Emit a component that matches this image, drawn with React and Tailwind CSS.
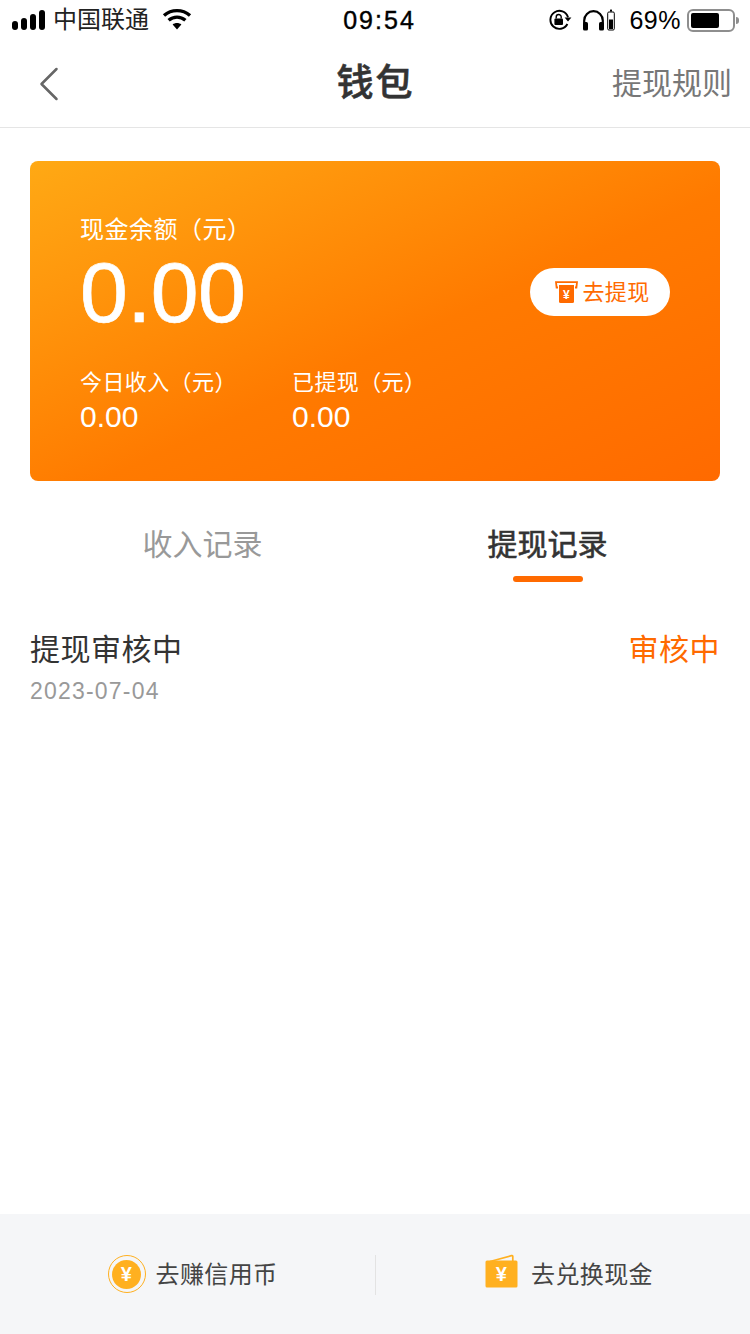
import { ChevronLeft } from 'lucide-react';

const FONT = "font-['Liberation_Sans','Noto_Sans_CJK_SC',sans-serif]";

function SignalBars() {
  return (
    <div className="flex items-end gap-[3px] h-[20px]">
      <span className="w-[6px] h-[9px] rounded-full bg-black" />
      <span className="w-[6px] h-[12px] rounded-full bg-black" />
      <span className="w-[6px] h-[16px] rounded-full bg-black" />
      <span className="w-[6px] h-[20px] rounded-full bg-black" />
    </div>
  );
}

function WifiIcon() {
  return (
    <svg width="30" height="22" viewBox="0 0 30 22" fill="none" stroke="black" strokeWidth="3.4">
      <path d="M2 7.5C9.5 1 20.5 1 28 7.5" />
      <path d="M6.6 12.3C11.6 8 18.4 8 23.4 12.3" />
      <path d="M15 21.5L10.6 16.6C13 14.6 17 14.6 19.4 16.6Z" fill="black" stroke="none" />
    </svg>
  );
}

function RotationLock() {
  return (
    <svg width="24" height="22" viewBox="0 0 24 22" fill="none">
      <path d="M20 8.2A9 9 0 1 0 19.4 15" stroke="black" strokeWidth="1.9" />
      <path d="M16.6 8.4H23.4L20 12.4Z" fill="black" />
      <rect x="6.4" y="9.4" width="8.6" height="6.6" rx="1" fill="black" />
      <path d="M8.2 9.6V8A2.5 2.5 0 0 1 13.2 8V9.6" stroke="black" strokeWidth="1.4" />
    </svg>
  );
}

function Headphones() {
  return (
    <svg width="34" height="22" viewBox="0 0 34 22" fill="none">
      <path d="M2.2 18V11.5A9.3 9.3 0 0 1 20.8 11.5V18" stroke="black" strokeWidth="2.2" />
      <rect x="1" y="13" width="5" height="8.5" rx="1.6" fill="black" />
      <rect x="17" y="13" width="5" height="8.5" rx="1.6" fill="black" />
      <rect x="25.7" y="3" width="6.6" height="18" rx="1.2" stroke="black" strokeWidth="1" />
      <rect x="28" y="0.6" width="2" height="2" fill="black" />
      <rect x="27" y="10.5" width="4" height="9.5" fill="black" />
    </svg>
  );
}

function Battery() {
  return (
    <div className="flex items-center">
      <div className="w-[48px] h-[23px] rounded-[6px] border-2 border-[#8e8e8e] p-[2px]">
        <div className="w-[28px] h-full rounded-[2px] bg-black" />
      </div>
      <span className="ml-[1px] w-[3px] h-[7px] rounded-r-full bg-[#8e8e8e]" />
    </div>
  );
}

function CashIcon() {
  return (
    <svg width="23" height="24" viewBox="0 0 23 24" fill="none">
      <path d="M3 7.5H1.6L1 2.2H22L21.4 7.5H20" stroke="#ff6a00" strokeWidth="1.8" />
      <path d="M4 5H19V21.5A1.5 1.5 0 0 1 17.5 23H5.5A1.5 1.5 0 0 1 4 21.5Z" fill="#ff6a00" />
      <text x="11.5" y="18.5" textAnchor="middle" fontSize="12" fontWeight="700" fill="white" fontFamily="Liberation Sans">¥</text>
    </svg>
  );
}

function CoinIcon() {
  return (
    <div className="w-[38px] h-[38px] -translate-y-[1px] rounded-full border border-[#ffb020] flex items-center justify-center">
      <div className="w-[29px] h-[29px] rounded-full bg-[#ffb020] flex items-center justify-center text-white text-[20px] font-bold leading-none">¥</div>
    </div>
  );
}

function WalletIcon() {
  return (
    <svg width="33" height="34" viewBox="0 0 33 34" fill="none">
      <path d="M5 7.5L26.5 1.6C27.4 1.4 27.8 1.8 27.8 2.6V7" stroke="#ffb020" strokeWidth="1.7" />
      <rect x="0.5" y="6.5" width="32" height="27" rx="1.5" fill="#ffb020" />
      <text x="16.5" y="27" textAnchor="middle" fontSize="20" fontWeight="700" fill="white" fontFamily="Liberation Sans">¥</text>
    </svg>
  );
}

export default function App() {
  return (
    <div className={`${FONT} w-[750px] h-[1334px] bg-white flex flex-col overflow-hidden`}>
      <div className="h-[40px] pl-[12px] pr-[11px] flex items-center justify-between text-black">
        <div className="w-[260px] flex items-center">
          <SignalBars />
          <span className="ml-[8px] text-[24px] leading-none text-[#222]">中国联通</span>
          <span className="ml-[13px] -translate-y-[1px]"><WifiIcon /></span>
        </div>
        <span className="ml-[8px] text-[25px] font-medium tracking-[2px] leading-none [-webkit-text-stroke:0.4px_black]">09:54</span>
        <div className="w-[260px] flex items-center justify-end">
          <RotationLock />
          <span className="ml-[10px]"><Headphones /></span>
          <span className="ml-[13px] text-[25px] leading-none tracking-[0.5px]">69%</span>
          <span className="ml-[6px]"><Battery /></span>
        </div>
      </div>

      <header className="h-[88px] border-b border-[#e5e5e5] pl-[19px] pr-[18px] grid grid-cols-3 items-center">
        <ChevronLeft size={60} strokeWidth={1} className="text-[#666]" />
        <h1 className="text-center text-[37px] font-medium text-[#333] tracking-[2px] leading-none [-webkit-text-stroke:0.6px_#333]">钱包</h1>
        <span className="text-right text-[30px] text-[#777] leading-none">提现规则</span>
      </header>

      <section className="mx-[30px] mt-[33px] h-[320px] rounded-[8px] bg-gradient-to-br from-[#ffa914] via-[#ff7a00] via-55% to-[#ff6a00] pl-[50px] pr-[50px] pt-[53px] text-white">
        <div className="flex items-end justify-between">
          <div>
            <p className="text-[24px] leading-[32px] tracking-[0.5px]">现金余额（元）</p>
            <p className="mt-[7px] text-[86px] leading-[78px] tracking-[-0.5px] [-webkit-text-stroke:0.7px_white]">0.00</p>
          </div>
          <button className="mb-[15px] pl-[4px] w-[140px] h-[48px] rounded-full bg-white flex items-center justify-center gap-[5px] text-[22px] tracking-[0.3px] text-[#ff6a00]">
            <CashIcon />
            去提现
          </button>
        </div>
        <div className="mt-[37px] flex">
          <div className="w-[212px]">
            <p className="text-[22px] leading-[30px] tracking-[0.4px]">今日收入（元）</p>
            <p className="mt-[1px] text-[30px] leading-[36px]">0.00</p>
          </div>
          <div>
            <p className="text-[22px] leading-[30px] tracking-[0.4px]">已提现（元）</p>
            <p className="mt-[1px] text-[30px] leading-[36px]">0.00</p>
          </div>
        </div>
      </section>

      <nav className="mt-[43px] px-[30px] grid grid-cols-2 text-[30px] leading-[42px]">
        <div className="text-center text-[#999]">收入记录</div>
        <div className="text-center text-[#333] [-webkit-text-stroke:0.6px_#333]">
          提现记录
          <div className="mt-[10px] mx-auto w-[70px] h-[6px] rounded-full bg-[#ff6a00]" />
        </div>
      </nav>

      <div className="mt-[46px] px-[30px] flex justify-between flex-1">
        <div>
          <p className="text-[30px] leading-[44px] text-[#333] tracking-[0.5px]">提现审核中</p>
          <p className="mt-[5px] text-[23px] leading-[28px] text-[#999] tracking-[1.2px]">2023-07-04</p>
        </div>
        <span className="text-[30px] leading-[44px] text-[#ff6a00] tracking-[0.5px]">审核中</span>
      </div>

      <footer className="h-[120px] pt-[2px] bg-[#f5f6f8] grid grid-cols-2 items-center text-[24px] tracking-[0.4px] text-[#444]">
        <div className="flex items-center justify-center gap-[10px] pl-[10px]">
          <CoinIcon />
          去赚信用币
        </div>
        <div className="h-[40px] flex items-center justify-center gap-[13px] border-l border-[#e3e3e3] pl-[12px]">
          <span className="-translate-y-[4px]"><WalletIcon /></span>
          去兑换现金
        </div>
      </footer>
    </div>
  );
}
